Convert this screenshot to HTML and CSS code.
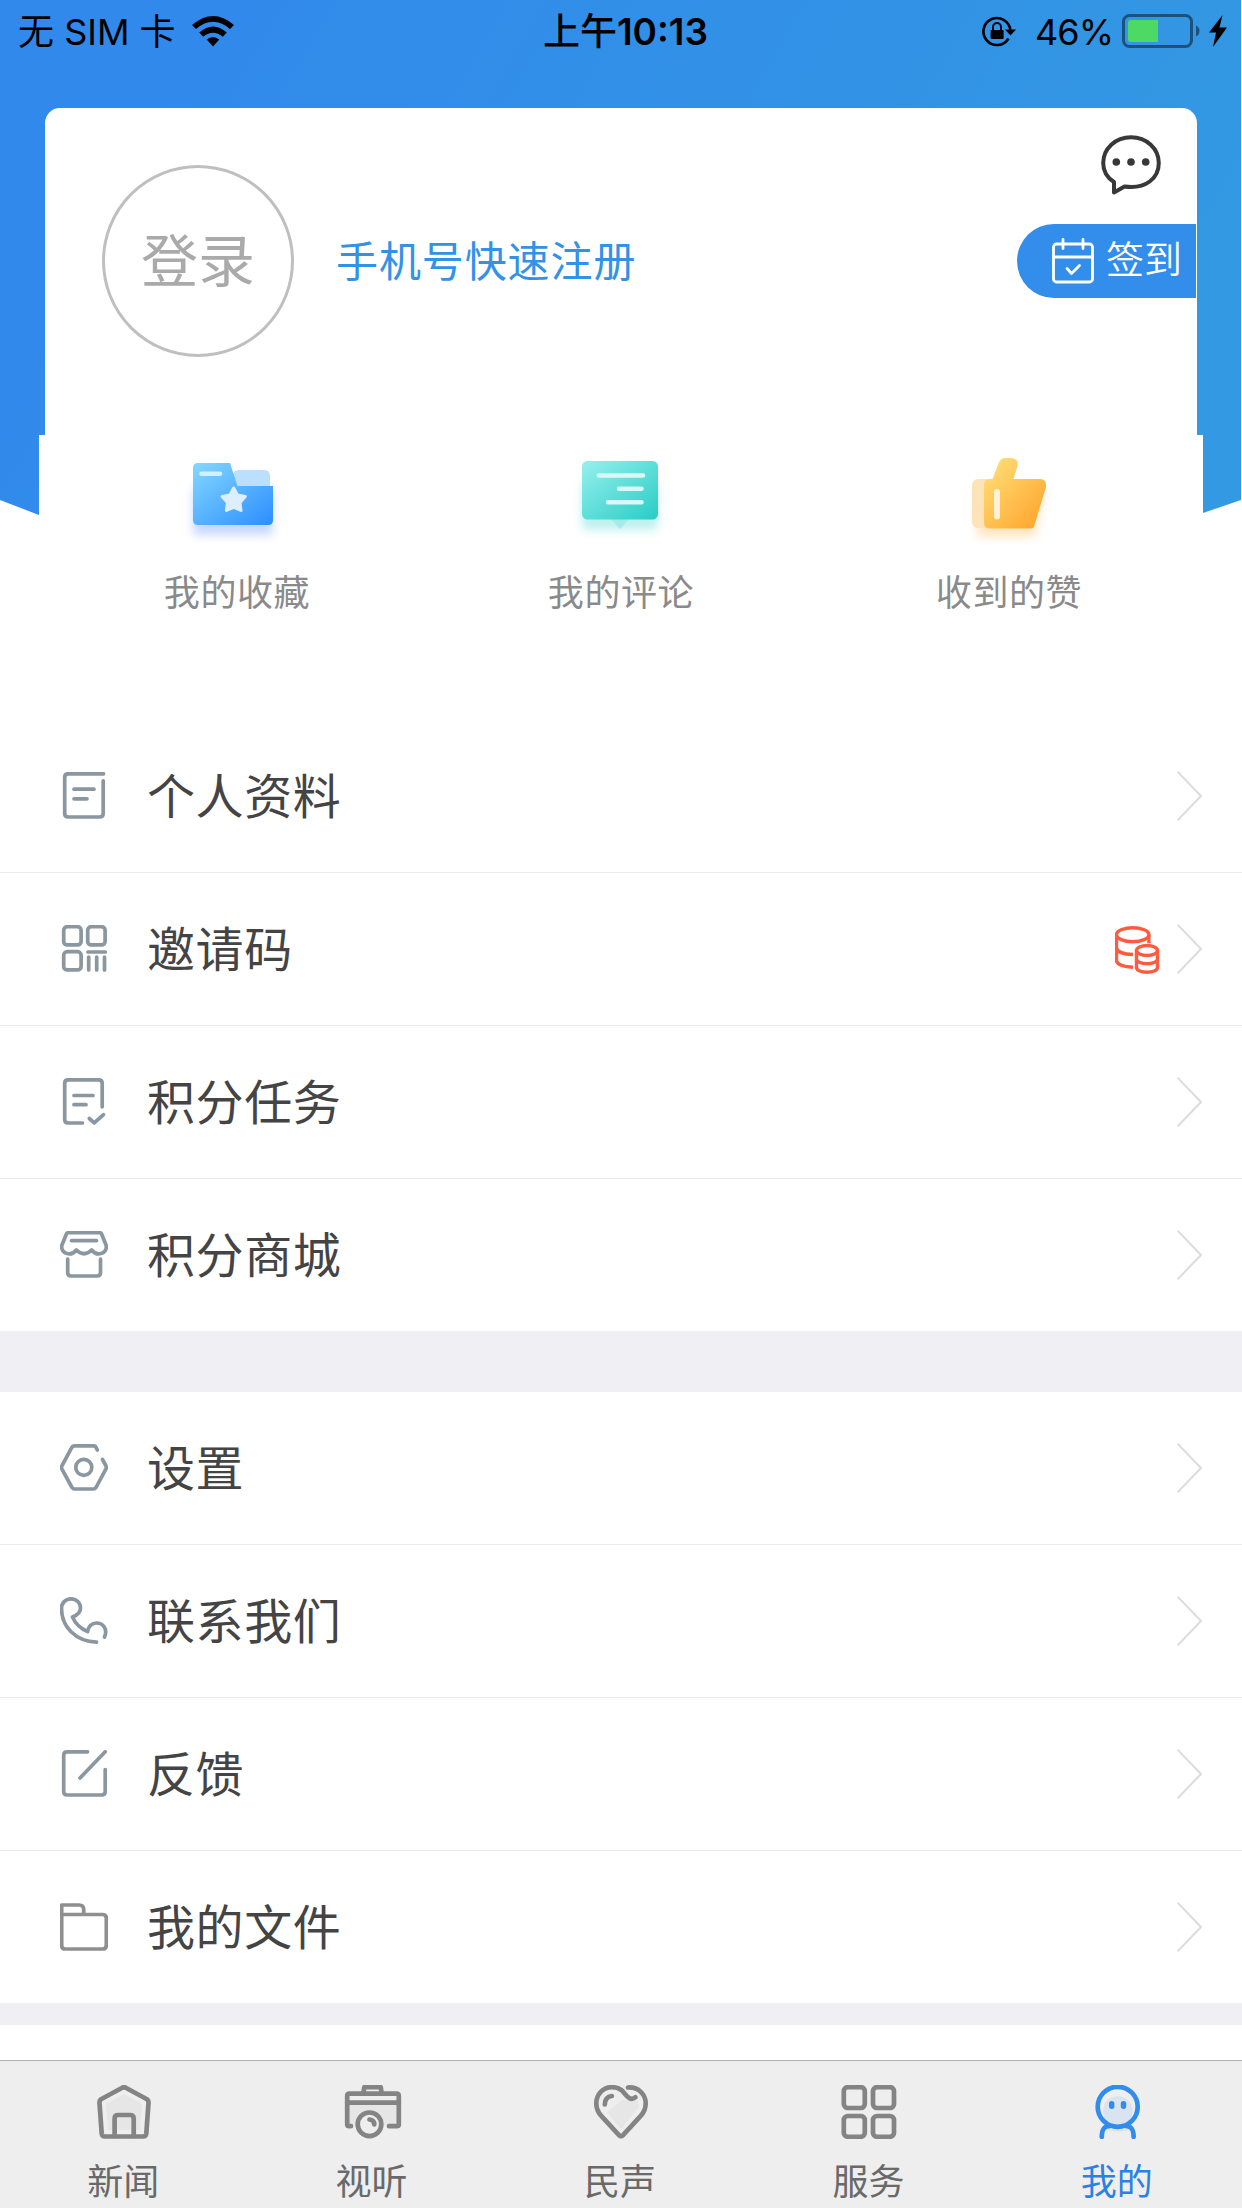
FILE: index.html
```html
<!DOCTYPE html>
<html lang="zh-CN">
<head>
  <meta charset="UTF-8">
  <meta name="viewport" content="width=device-width, initial-scale=1.0">
  <title>我的</title>
  <link rel="stylesheet" href="styles.css">
</head>
<body>

  <div class="hero">
    <header class="status-bar">
      <div class="status-left">
        <span class="carrier">无 SIM 卡</span>
        <svg class="wifi" width="42" height="31" viewBox="0 0 42 31">
          <path d="M21 30.5 L14.7 23.5 Q21 18.500 27.300 23.500 Z"/>
          <path d="M7.200 16.500 Q21 4.500 34.800 16.500 L30.800 20.800 Q21 12.500 11.200 20.800 Z"/>
          <path d="M0 9 Q21 -9 42 9 L38 13 Q21 -1.500 4 13 Z"/>
        </svg>
      </div>
      <div class="status-time"><span>上午</span>10:13</div>
      <div class="status-right">
        <svg class="lock" width="34" height="31" viewBox="0 0 34 31">
          <path d="M26.500 22.500 A13.500 13.500 0 1 1 28.400 14.500" fill="none" stroke="#000" stroke-width="2.600"/>
          <path d="M23 13.500 H34 L28.500 19.500 Z"/>
          <rect x="8.600" y="14" width="13" height="9" rx="1"/>
          <path d="M11 14.500 V11 a4 4 0 0 1 8 0 V14.500" fill="none" stroke="#000" stroke-width="2"/>
        </svg>
        <span class="percent">46%</span>
        <svg class="battery" width="80" height="34" viewBox="0 0 80 34">
          <rect x="1.500" y="1.500" width="68" height="31" rx="6" fill="none" stroke="#000" stroke-opacity=".45" stroke-width="3"/>
          <path d="M9 6 H36 V28 H9 a3 3 0 0 1 -3 -3 V9 a3 3 0 0 1 3 -3 Z" fill="#4cd964"/>
          <path d="M74 11.500 Q77.500 13 77.500 17 Q77.500 21 74 22.500 Z" fill-opacity=".45"/>
        </svg>
        <svg class="bolt" width="18" height="32" viewBox="0 0 18 32">
          <path d="M13.500 0 L0 17.500 H7 L4 32 L18 12.500 H10.500 Z"/>
        </svg>
      </div>
    </header>

    <section class="card">
      <a class="avatar" href="#">登录</a>
      <a class="register" href="#">手机号快速注册</a>
      <div class="card-side">
        <svg class="chat" width="60" height="60" viewBox="0 0 60 60" fill="none" stroke="#383838" stroke-width="4" stroke-linejoin="round">
          <path d="M13 47 C6 42.500 2.200 35.500 2.200 28 C2.200 13.500 14.500 2.200 30 2.200 C45.500 2.200 57.800 13.500 57.800 28 C57.800 43 45 54.500 23.500 51.500 L13 57.500 Z"/>
          <g fill="#383838" stroke="none">
            <circle cx="15.300" cy="27" r="3.800"/>
            <circle cx="30" cy="27" r="3.800"/>
            <circle cx="44.700" cy="27" r="3.800"/>
          </g>
        </svg>
        <a class="checkin" href="#">
          <svg width="42" height="46" viewBox="0 0 42 46" fill="none" stroke="#fff" stroke-width="2.800" stroke-linecap="round" stroke-linejoin="round">
            <rect x="1.500" y="6" width="39" height="38" rx="3"/>
            <path d="M1.300 19 H40.700"/>
            <path d="M11 1.500 V10.500 M31 1.500 V10.500"/>
            <path d="M15 30.500 L19.500 35.500 L27.500 27.500"/>
          </svg>
          <span>签到</span>
        </a>
      </div>
    </section>

    <nav class="stats">
      <a class="stat favorites" href="#">
        <svg width="112" height="100" viewBox="0 0 112 100">
          <defs>
            <linearGradient id="blue" x1="0" y1="0" x2="1" y2="1">
              <stop offset="0" stop-color="#84d8ff"/>
              <stop offset="1" stop-color="#2c8dff"/>
            </linearGradient>
            <filter id="soft" x="-30%" y="-30%" width="160%" height="160%">
              <feGaussianBlur stdDeviation="5"/>
            </filter>
          </defs>
          <rect x="16" y="42" width="80" height="48" rx="4" fill="#4f86ff" opacity=".32" filter="url(#soft)"/>
          <path d="M56 43 V31 q0 -6 6 -6 H87 q6 0 6 6 V43 Z" fill="#bbdfff"/>
          <path d="M21 18 H53 L60.500 41 H96 V75 q0 5 -5 5 H21 q-5 0 -5 -5 V23 q0 -5 5 -5 Z" fill="url(#blue)"/>
          <path d="M24.500 28.700 H43" stroke="#d4efff" stroke-width="4.600" stroke-linecap="round"/>
          <path d="M56.700 43 L60.500 50 L68.300 51.500 L63 57.500 L64 65.500 L56.700 62.300 L49.400 65.500 L50.400 57.500 L45.100 51.500 L52.900 50 Z" fill="#ddeeff" stroke="#ddeeff" stroke-width="3" stroke-linejoin="round"/>
        </svg>
        <span>我的收藏</span>
      </a>
      <a class="stat" href="#">
        <svg width="112" height="100" viewBox="0 0 112 100">
          <defs>
            <linearGradient id="teal" x1="0" y1="0" x2="1" y2="1">
              <stop offset="0" stop-color="#97f0ed"/>
              <stop offset="1" stop-color="#28ccc6"/>
            </linearGradient>
          </defs>
          <rect x="17" y="38" width="76" height="47" rx="5" fill="#2bcfc9" opacity=".3" filter="url(#soft)"/>
          <path d="M45 73 H65 L55 84 Z" fill="#a5ece8"/>
          <rect x="17" y="16" width="76" height="58.500" rx="5.500" fill="url(#teal)"/>
          <path d="M34 30.500 H78 M54 43.700 H76.500 M43 57.200 H76.500" stroke="#daf8f6" stroke-width="4.600" stroke-linecap="round"/>
        </svg>
        <span>我的评论</span>
      </a>
      <a class="stat" href="#">
        <svg width="112" height="100" viewBox="0 0 112 100">
          <defs>
            <linearGradient id="gold" x1="0" y1="0" x2="1" y2="1">
              <stop offset="0" stop-color="#ffe27e"/>
              <stop offset="1" stop-color="#ffa126"/>
            </linearGradient>
          </defs>
          <path d="M24 45 H92 L82 92 H24 Z" fill="#ffb13e" opacity=".32" filter="url(#soft)"/>
          <rect x="19" y="34" width="26" height="49" rx="6" fill="#fce4b8"/>
          <path d="M37 34 H39.500 L45.500 18.500 Q47.500 13 52 13 H58 Q66 13.500 64.500 21 L60.500 34 H87 Q94 34.500 93 42 L81.500 80 Q80.500 83.500 78 83.500 H37 q-6 0 -6 -6 V40 q0 -6 6 -6 Z" fill="url(#gold)"/>
          <path d="M44 47 V71.500" stroke="#fff1d9" stroke-width="6" stroke-linecap="round"/>
        </svg>
        <span>收到的赞</span>
      </a>
    </nav>
  </div>

  <main>
    <ul class="menu">
      <li>
        <svg class="icon" viewBox="0 0 48 48">
          <path d="M43.500 1.800 H8.200 q-3.500 0 -3.500 3.500 V41.500 q0 3.500 3.500 3.500 H39.700 q3.500 0 3.500 -3.500 V8.800"/>
          <path d="M14 17.200 H34 M14 26.800 H27"/>
        </svg>
        <span>个人资料</span>
        <svg class="arrow" viewBox="0 0 25 50"><path d="M.6 .8 L24 25 L.6 49.200"/></svg>
      </li>
      <li>
        <svg class="icon" viewBox="0 0 48 48">
          <rect x="3.700" y="1.700" width="17.400" height="18.200" rx="3.500"/>
          <rect x="27.700" y="1.700" width="17.400" height="18.200" rx="3.500"/>
          <rect x="3.700" y="26.700" width="17.400" height="18.200" rx="3.500"/>
          <path d="M28 27 H45.300 M28.700 32.200 V45 M36.700 32.200 V45 M44.500 32.200 V45"/>
        </svg>
        <span>邀请码</span>
        <svg class="coins" viewBox="0 0 45 48">
          <ellipse cx="17.700" cy="8.700" rx="16.200" ry="7"/>
          <path d="M1.500 8.700 V34.500 C1.500 38 8 41 18 41.200 M1.500 21.500 C1.500 25.500 8 28.200 18 28.500 M33.900 8.700 V17.300"/>
          <ellipse cx="32" cy="24.500" rx="10.500" ry="5"/>
          <path d="M21.500 24.500 V41.500 C21.500 47.800 42.500 47.800 42.500 41.500 V24.500 M21.500 33 C21.500 39.300 42.500 39.300 42.500 33"/>
        </svg>
        <svg class="arrow" viewBox="0 0 25 50"><path d="M.6 .8 L24 25 L.6 49.200"/></svg>
      </li>
      <li>
        <svg class="icon" viewBox="0 0 48 48">
          <path d="M22.500 45 H8.200 q-3.500 0 -3.500 -3.500 V5.300 q0 -3.500 3.500 -3.500 H38.700 q3.500 0 3.500 3.500 V28.800"/>
          <path d="M14 17.500 H33 M14 26.700 H26 M29.300 40.500 L34.300 44.800 L43.500 36.700"/>
        </svg>
        <span>积分任务</span>
        <svg class="arrow" viewBox="0 0 25 50"><path d="M.6 .8 L24 25 L.6 49.200"/></svg>
      </li>
      <li>
        <svg class="icon" viewBox="0 0 48 48">
          <path d="M8.500 1.700 H39.500 q1.500 0 2.200 1.500 L46.200 14.500 C47.500 22 37.500 26.500 31.600 19 Q24 26.500 16.400 19 C10.500 26.500 .5 22 1.800 14.500 L6.300 3.200 q.7 -1.500 2.200 -1.500 Z"/>
          <path d="M11.500 9.600 H36.500 M7.700 28 V41.500 q0 3.500 3.500 3.500 H37 q3.500 0 3.500 -3.500 V28"/>
        </svg>
        <span>积分商城</span>
        <svg class="arrow" viewBox="0 0 25 50"><path d="M.6 .8 L24 25 L.6 49.200"/></svg>
      </li>
    </ul>

    <ul class="menu">
      <li>
        <svg class="icon" viewBox="0 0 48 48">
          <path d="M37.300 6 L35.700 2.800 Q35 1.800 33.500 1.800 H14.500 Q13 1.800 12 3.200 L1.800 22 Q1.200 23.400 1.800 24.800 L12 43.500 Q13 45 14.500 45 H33.500 Q35 45 36 43.500 L46 24.800 Q46.600 23.400 46 22 L42.500 15.500"/>
          <circle cx="23.800" cy="23.400" r="8"/>
        </svg>
        <span>设置</span>
        <svg class="arrow" viewBox="0 0 25 50"><path d="M.6 .8 L24 25 L.6 49.200"/></svg>
      </li>
      <li>
        <svg class="icon" viewBox="0 0 48 48">
          <path d="M36.500 45.200 C16 44.500 1.500 30 1.500 11.500 C1.500 6 5.500 1.800 11 1.800 C16.500 1.800 20.500 6 20.500 11 C20.500 15.500 16.500 18.500 12.500 20 C15 26 21 32 27.700 34.500 C28 29.500 32 26 36.500 26 C43 26 48 32 44.500 40"/>
        </svg>
        <span>联系我们</span>
        <svg class="arrow" viewBox="0 0 25 50"><path d="M.6 .8 L24 25 L.6 49.200"/></svg>
      </li>
      <li>
        <svg class="icon" viewBox="0 0 48 48">
          <path d="M27.500 1.800 H7.200 q-3.500 0 -3.500 3.500 V41.500 q0 3.500 3.500 3.500 H41.700 q3.500 0 3.500 -3.500 V19.500 M45.200 1.800 L20 28"/>
        </svg>
        <span>反馈</span>
        <svg class="arrow" viewBox="0 0 25 50"><path d="M.6 .8 L24 25 L.6 49.200"/></svg>
      </li>
      <li>
        <svg class="icon gray" viewBox="0 0 48 48">
          <path d="M1.700 11.500 V2 H19 q4.700 0 4.700 4.500 V11.500 M1.700 11.500 H42.500 q3.800 0 3.800 3.800 V42.200 q0 3.800 -3.800 3.800 H5.200 q-3.500 0 -3.500 -3.500 Z"/>
        </svg>
        <span>我的文件</span>
        <svg class="arrow" viewBox="0 0 25 50"><path d="M.6 .8 L24 25 L.6 49.200"/></svg>
      </li>
    </ul>
  </main>

  <footer class="tabbar">
    <a class="tab" href="#">
      <svg viewBox="0 0 60 54">
        <path d="M30 9 L48 19 L46 45 H14 L12 19 Z" fill="#e6e6e6" stroke="none"/>
        <path d="M27.800 3 Q30 1.600 32.200 3 L52.500 14 Q54.700 15.300 54.500 18 L52.300 48.500 Q52 51.500 49 51.500 H11 Q8 51.500 7.700 48.500 L5.500 18 Q5.300 15.300 7.500 14 Z"/>
        <path d="M20.600 51 V33.500 q0 -3.500 3.500 -3.500 H36.200 q3.500 0 3.500 3.500 V51"/>
      </svg>
      <span>新闻</span>
    </a>
    <a class="tab" href="#">
      <svg viewBox="0 0 60 54">
        <path d="M6 20 H54 V40 H6 Z" fill="#e6e6e6" stroke="none"/>
        <circle cx="26.500" cy="39.300" r="11.800" fill="#eee"/>
        <path d="M8 41.200 H6.200 q-2 0 -2 -2 V11 q0 -2.300 2.300 -2.300 H53.500 q2.300 0 2.300 2.300 V39.200 q0 2 -2 2 H46 M4 17.700 H56 M20.300 8.500 L21.300 2.200 H37.700 L38.700 8.500 M26.500 34.500 Q31.300 35 31.300 39.500"/>
      </svg>
      <span>视听</span>
    </a>
    <a class="tab" href="#">
      <svg viewBox="0 0 60 54">
        <path d="M31 15 Q44 18 46 13 L48 22 L30 44 L16 27 Z" fill="#e6e6e6" stroke="none"/>
        <path d="M44.300 12.300 C38 17.500 34 7.500 30 4.800 C27.500 2.800 24.500 2.200 21 2.200 C12 2.200 5.300 9.500 5.300 18.500 C5.300 24 7.500 28 10.500 31.200 L28.200 50.300 Q30 52.200 31.800 50.300 L49.500 31.200 C52.500 28 54.700 24 54.700 18.500 C54.700 9.500 47.500 1.800 37 2.500 M13.800 19.500 Q14 11.800 20.800 11"/>
      </svg>
      <span>民声</span>
    </a>
    <a class="tab" href="#">
      <svg viewBox="0 0 60 54">
        <rect x="4.800" y="2.200" width="21" height="20.800" rx="4"/>
        <rect x="34" y="2.200" width="21" height="20.800" rx="4"/>
        <rect x="4.800" y="31" width="21" height="20.800" rx="4"/>
        <rect x="34" y="31" width="21" height="20.800" rx="4"/>
      </svg>
      <span>服务</span>
    </a>
    <a class="tab active" href="#">
      <svg viewBox="0 0 60 54">
        <path d="M15 26 a14.800 14.800 0 0 1 29.600 0 C44.600 33 40 38 40 45 Q30 48.500 20 45 C20 38 15 33 15 26 Z" fill="#dae3f0" stroke="none"/>
        <circle cx="29.700" cy="21.800" r="20"/>
        <path d="M13.800 51.800 C13.800 44 16 41 22 41 M45.600 51.800 C45.600 44 43.400 41 37.400 41"/>
        <path d="M23.700 18.800 V21.300 M35.500 18.800 V21.300" stroke-width="5.400"/>
      </svg>
      <span>我的</span>
    </a>
  </footer>

</body>
</html>
```
FILE: styles.css
```css
* {
  box-sizing: border-box;
}

body {
  margin: 0;
  height: 2208px;
  display: flex;
  flex-direction: column;
  overflow: hidden;
  background-color: #fff;
  font-family: Inter, "Noto Sans CJK SC", sans-serif;
}

a {
  color: inherit;
  text-decoration: none;
}

svg {
  display: block;
  flex: none;
}

/* header */
.hero {
  position: relative;
  height: 720px;
  flex: none;
}

.hero::before {
  content: "";
  position: absolute;
  z-index: -1;
  top: 0;
  left: 0;
  right: 1px;
  height: 530px;
  background: linear-gradient(120deg, #318aeb 15%, #3399e2 90%);
  clip-path: polygon(0 0, 100% 0, 100% 500px, 1203px 513px, 1203px 530px, 39px 530px, 39px 515px, 0 500px);
}

.status-bar {
  display: grid;
  grid-template-columns: 1fr auto 1fr;
  align-items: center;
  height: 60px;
  padding: 0 15px 0 18px;
  font-size: 36px;
  line-height: 60px;
}

.status-left,
.status-right {
  display: flex;
  align-items: center;
}

.carrier {
  width: 174px;
  padding-top: 2px;
  white-space: nowrap;
}

.status-time {
  margin-left: 6px;
  padding-top: 2px;
  font-size: 37px;
  font-weight: 600;
}

.status-time span {
  font-weight: 500;
}

.status-right {
  justify-content: flex-end;
}

.percent {
  margin: 0 9px 0 19px;
  padding-top: 2px;
  letter-spacing: -1px;
}

.bolt {
  margin-left: 7px;
}

.card {
  display: flex;
  align-items: flex-start;
  height: 327px;
  margin: 48px 45px 0;
  padding-left: 57px;
  background-color: #fff;
  border-radius: 15px 15px 0 0;
}

.avatar {
  width: 192px;
  height: 192px;
  margin-top: 57px;
  border: 3px solid #bfbfbf;
  border-radius: 50%;
  color: #aaa;
  font-size: 57px;
  line-height: 188px;
  text-align: center;
}

.register {
  margin: 124px 0 0 42px;
  color: #3392e6;
  font-size: 42px;
  line-height: 60px;
  letter-spacing: .9px;
}

.card-side {
  margin: 27px 1px 0 auto;
}

.chat {
  margin-left: 84px;
}

.checkin {
  display: flex;
  align-items: center;
  width: 179px;
  height: 74px;
  margin-top: 29px;
  padding-left: 35px;
  background-color: #338deb;
  border-radius: 37px 0 0 37px;
  color: #fff;
  font-size: 38px;
  font-weight: 350;
  line-height: 70px;
}

.checkin span {
  margin-left: 12px;
  padding-bottom: 4px;
}

.stats {
  display: flex;
  height: 285px;
  margin: 0 39px;
  background-color: #fff;
}

.stat {
  display: flex;
  flex: 1;
  flex-direction: column;
  align-items: center;
  padding-top: 10px;
  color: #8a8a8a;
  font-size: 36px;
  line-height: 50px;
  letter-spacing: .6px;
}

.stat span {
  margin-top: 23px;
}

.favorites span {
  margin-left: 8px;
}

/* menu */
.menu {
  margin: 0;
  padding: 0;
  list-style: none;
  border-bottom: 61px solid #efeff4;
}

.menu + .menu {
  border-bottom-width: 22px;
}

.menu li {
  display: flex;
  align-items: center;
  height: 153px;
  padding: 0 40px 0 60px;
  border-bottom: 1px solid #ebebee;
}

.menu li:last-child {
  height: 152px;
  border-bottom: none;
}

.menu span {
  flex: 1;
  margin-left: 39px;
  padding-top: 2px;
  color: #444;
  font-size: 48px;
  line-height: 70px;
  letter-spacing: .6px;
}

.icon {
  width: 48px;
  height: 48px;
  fill: none;
  stroke: #8a96a0;
  stroke-width: 3.7;
  stroke-linecap: round;
  stroke-linejoin: round;
}

.icon.gray {
  stroke: #8f8f8f;
}

.coins {
  width: 45px;
  height: 48px;
  margin: 1px 17px 0 0;
  fill: none;
  stroke: #ff5b3e;
  stroke-width: 3.4;
}

.arrow {
  width: 25px;
  height: 50px;
  fill: none;
  stroke: #dcdcdc;
  stroke-width: 2;
}

/* bottom tabs */
.tabbar {
  display: flex;
  height: 148px;
  margin-top: auto;
  flex: none;
  background-color: #eee;
  border-top: 1px solid #b2b2b2;
}

.tab {
  display: flex;
  flex: 1;
  flex-direction: column;
  align-items: center;
  padding-top: 24px;
  color: #696969;
  font-size: 36px;
  line-height: 50px;
}

.tab svg {
  width: 60px;
  height: 54px;
  fill: none;
  stroke: #848484;
  stroke-width: 4.7;
  stroke-linecap: round;
  stroke-linejoin: round;
}

.tab span {
  margin: 18px 2px 0 0;
}

.tab.active {
  color: #2b80e0;
}

.tab.active svg {
  stroke: #318ceb;
}
```
